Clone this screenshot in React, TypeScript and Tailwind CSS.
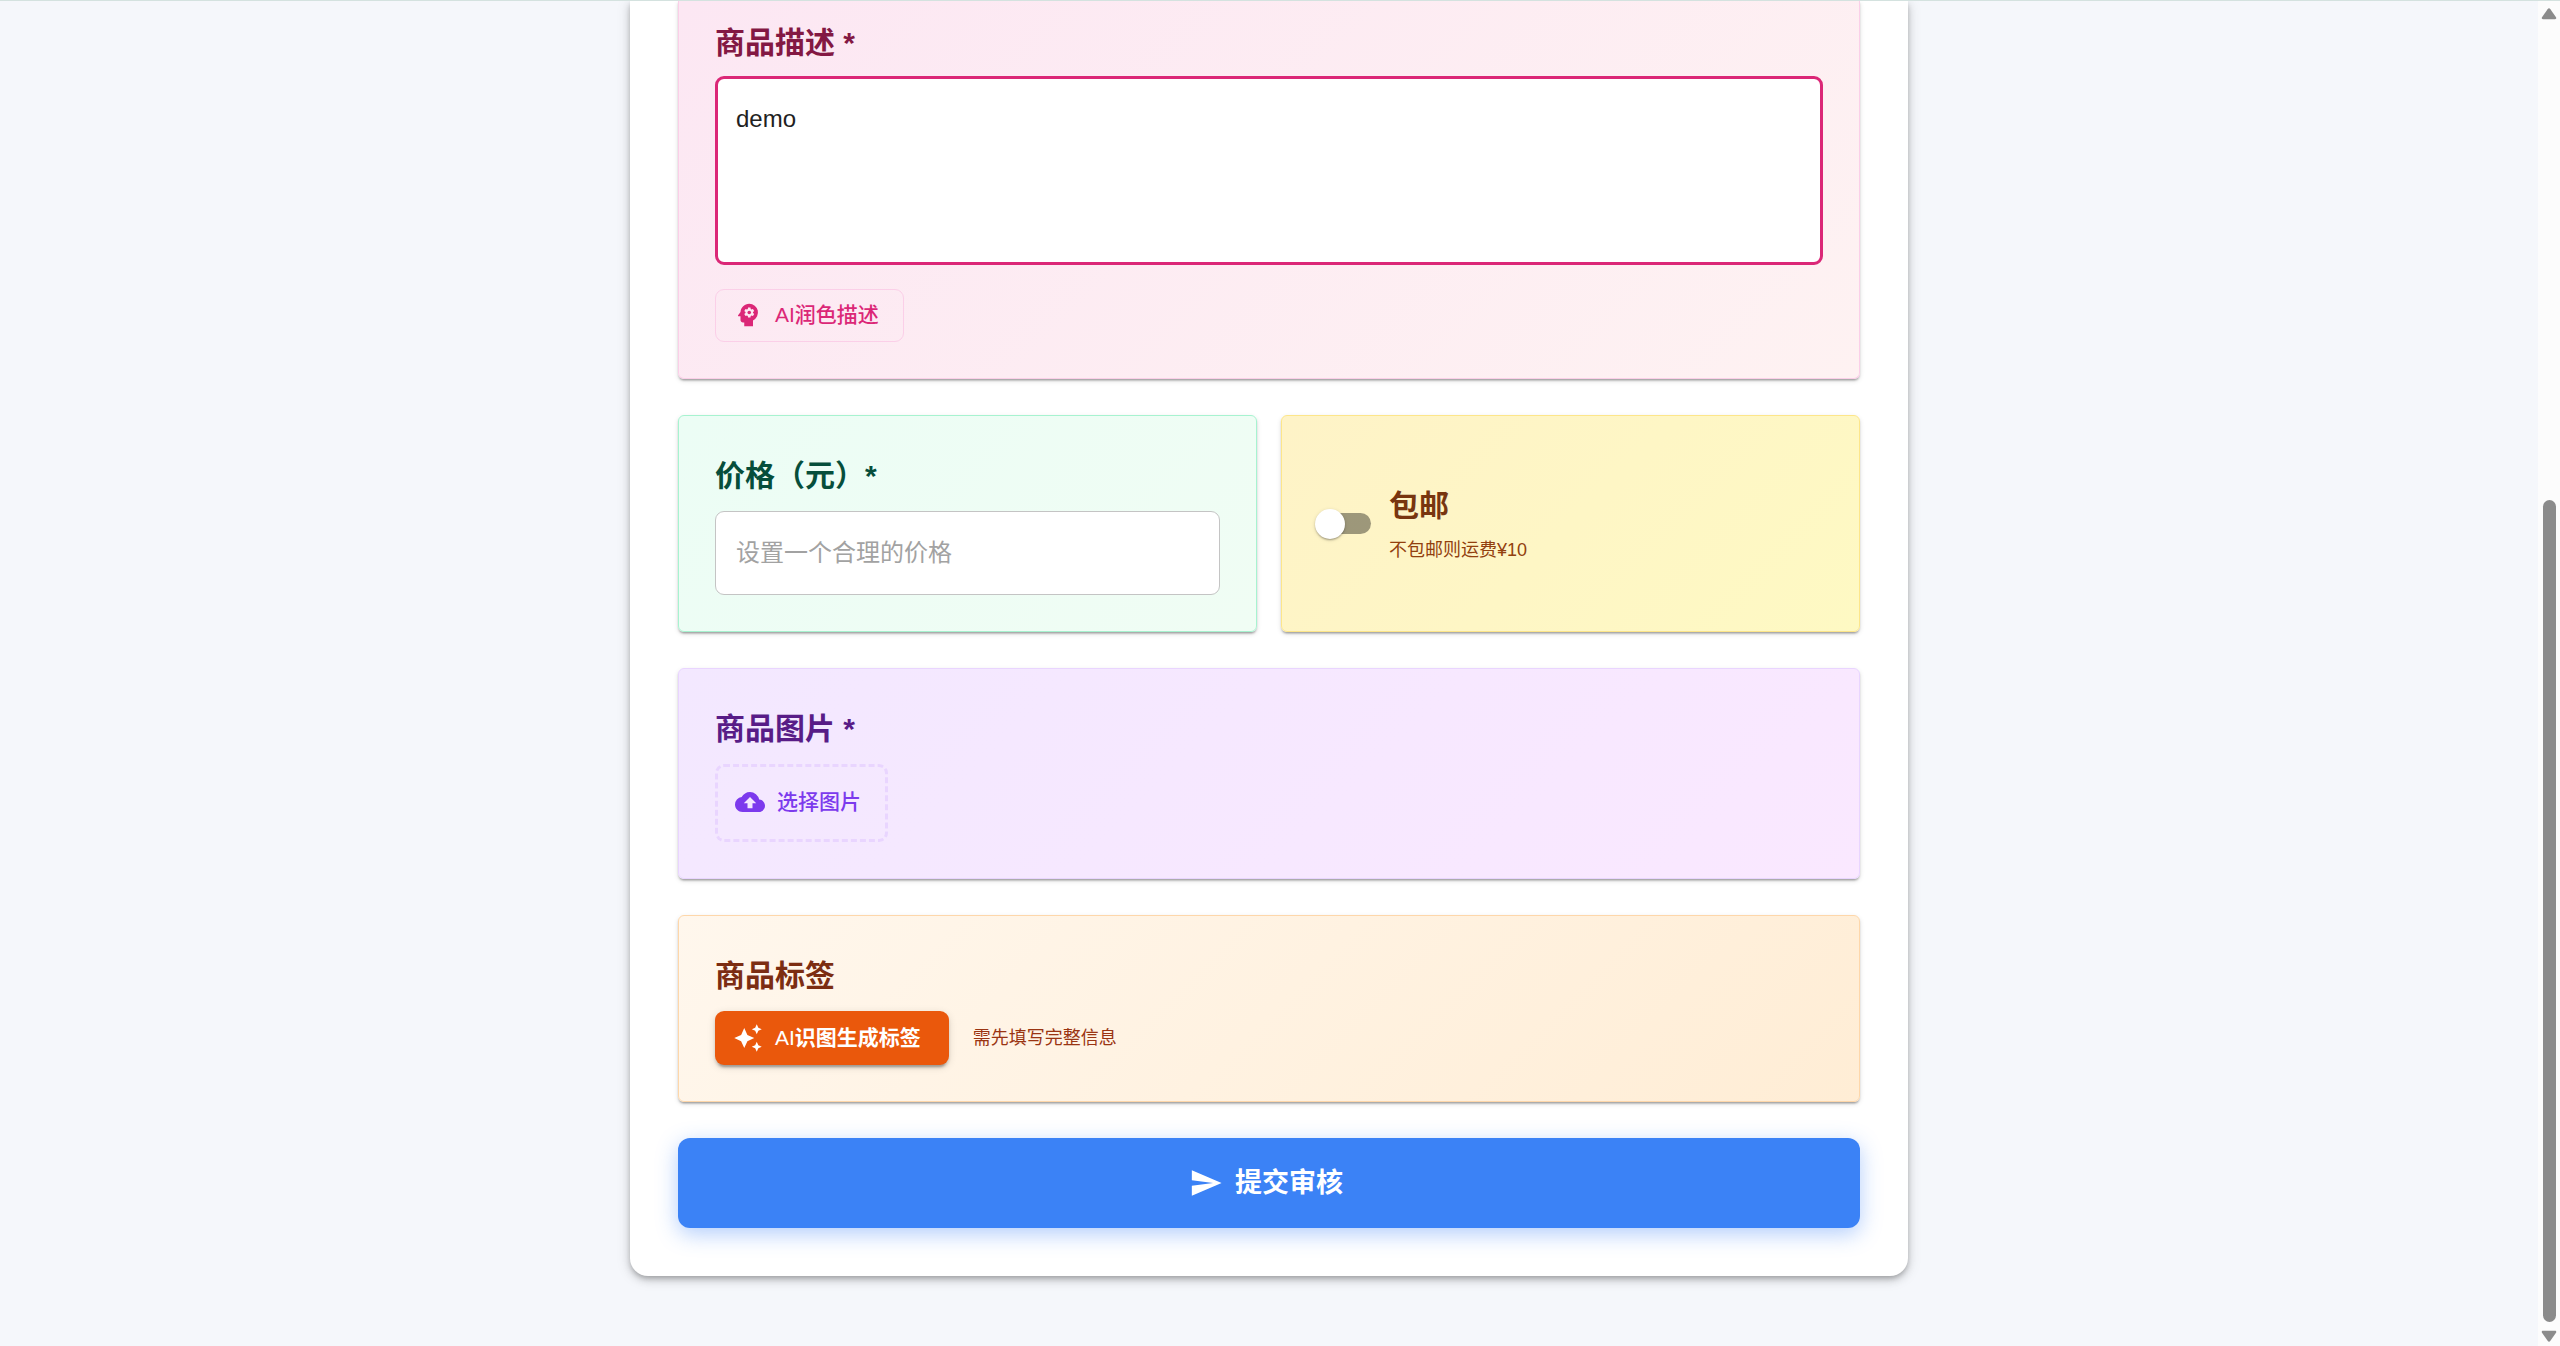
import { useState } from "react";
import type { ReactNode } from "react";
import clsx from "clsx";
import { MdAutoAwesome, MdCloudUpload, MdPsychology, MdSend } from "react-icons/md";

const cardShadow =
  "shadow-[0_3px_2px_-2px_rgba(0,0,0,0.2),0_2px_2px_0_rgba(0,0,0,0.14),0_2px_5px_0_rgba(0,0,0,0.12)]";

type SectionProps = {
  className?: string;
  children: ReactNode;
};

function Section({ className, children }: SectionProps) {
  return (
    <section className={clsx("border bg-linear-135 px-9", cardShadow, className)}>
      {children}
    </section>
  );
}

function Scrollbar() {
  return (
    <div aria-hidden="true" className="flex w-[22px] shrink-0 flex-col items-center bg-[#fcfcfc] pt-[7px] pb-1">
      <svg viewBox="0 0 16 12" className="h-3 w-4 fill-[#8b8b8b]">
        <path d="M6.6 1.2a1.8 1.8 0 0 1 2.8 0l5.6 8c.6 1 .2 2-1 2H2c-1.2 0-1.6-1-1-2z" />
      </svg>
      <div className="h-[480px] shrink-0" />
      <div className="w-[13px] flex-1 rounded-full bg-[#8b8b8b]" />
      <svg viewBox="0 0 16 12" className="mt-2 h-3 w-4 fill-[#8b8b8b]">
        <path d="M6.6 10.8a1.8 1.8 0 0 0 2.8 0l5.6-8c.6-1 .2-2-1-2H2c-1.2 0-1.6 1-1 2z" />
      </svg>
    </div>
  );
}

export default function App() {
  const [description, setDescription] = useState("demo");
  const [price, setPrice] = useState("");
  const [freeShipping, setFreeShipping] = useState(false);

  return (
    <div className="flex h-screen overflow-hidden border-t border-[#d4e2df] bg-[#f5f7fb] font-['Liberation_Sans','Noto_Sans_CJK_SC',sans-serif]">
      <main className="flex-1">
        <form
          onSubmit={(e) => e.preventDefault()}
          className="mx-auto flex max-w-[1278px] flex-col gap-9 rounded-b-[18px] bg-white px-12 pb-12 shadow-[0_3px_5px_-1px_rgba(0,0,0,0.2),0_4px_8px_0_rgba(0,0,0,0.14),0_2px_15px_0_rgba(0,0,0,0.12)]"
        >
          <Section className="rounded-b-md border-t-0 border-[#fbcfe8] from-[#fce7f3] to-[#fef2f2] pt-[18px] pb-9">
            <label
              htmlFor="description"
              className="mb-2.5 block text-[30px] leading-[47px] font-bold text-[#831843]"
            >
              商品描述 *
            </label>
            <textarea
              id="description"
              value={description}
              onChange={(e) => setDescription(e.target.value)}
              className="block h-[189px] w-full resize-none rounded-[9px] border-3 border-[#db2777] bg-white px-[18px] py-[22px] text-2xl leading-[35px] text-[#212121] outline-none"
            />
            <button
              type="button"
              className="mt-6 flex h-[53px] items-center gap-3 rounded-[9px] border border-[#fbcfe8] pr-6 pb-0.5 pl-[17px] text-[21px] font-medium text-[#db2777]"
            >
              <MdPsychology className="size-[30px]" />
              AI润色描述
            </button>
          </Section>

          <div className="grid grid-cols-2 gap-6">
            <Section className="rounded-md border-[#a7f3d0] from-[#ecfdf5] to-[#f0fdf4] py-9">
              <label
                htmlFor="price"
                className="mb-3 block text-[30px] leading-[47px] font-bold text-[#064e3b]"
              >
                价格（元）*
              </label>
              <input
                id="price"
                inputMode="decimal"
                value={price}
                onChange={(e) => setPrice(e.target.value)}
                placeholder="设置一个合理的价格"
                className="block h-[84px] w-full rounded-[9px] border border-[#c4c4c4] bg-white px-5 text-2xl text-[#212121] outline-none placeholder:text-[#a2a2a2]"
              />
            </Section>

            <Section className="flex items-center rounded-md border-[#fde68a] from-[#fef3c7] to-[#fef9c3] py-9">
              <label className="flex items-center gap-[18px]">
                <span className="relative -ml-[3px] flex h-[30px] w-14 items-center justify-end">
                  <input
                    type="checkbox"
                    role="switch"
                    aria-label="包邮"
                    checked={freeShipping}
                    onChange={(e) => setFreeShipping(e.target.checked)}
                    className="peer h-[21px] w-[51px] appearance-none rounded-full bg-black/38 outline-none checked:bg-[#d97706]"
                  />
                  <span className="pointer-events-none absolute left-0 size-[30px] rounded-full bg-white shadow-[0_2px_2px_-1px_rgba(0,0,0,0.2),0_1px_2px_0_rgba(0,0,0,0.14),0_1px_4px_0_rgba(0,0,0,0.12)] peer-checked:left-[30px]" />
                </span>
                <span className="flex flex-col gap-1.5">
                  <span className="text-[30px] leading-[47px] font-bold text-[#78350f]">包邮</span>
                  <span className="text-lg leading-[30px] text-[#92400e]">不包邮则运费¥10</span>
                </span>
              </label>
            </Section>
          </div>

          <Section className="rounded-md border-[#e9d5ff] from-[#f3e8ff] to-[#fae8ff] py-9">
            <h2 className="mb-3 text-[30px] leading-[47px] font-bold text-[#581c87]">商品图片 *</h2>
            <button
              type="button"
              className="flex h-[78px] items-center gap-3 rounded-[9px] border-3 border-dashed border-[#e9d5ff] pr-6 pb-0.5 pl-[17px] text-[21px] font-medium text-[#7c3aed]"
            >
              <MdCloudUpload className="size-[30px]" />
              选择图片
            </button>
          </Section>

          <Section className="rounded-md border-[#fed7aa] from-[#fff7ed] to-[#ffedd5] py-9">
            <h2 className="mb-3 text-[30px] leading-[47px] font-bold text-[#7c2d12]">商品标签</h2>
            <div className="flex items-center gap-6">
              <button
                type="button"
                className="flex h-[54px] items-center gap-3 rounded-[9px] bg-[#ea580c] pr-7 pl-[18px] text-[21px] text-white shadow-[0_5px_2px_-3px_rgba(0,0,0,0.2),0_3px_3px_0_rgba(0,0,0,0.14),0_2px_8px_0_rgba(0,0,0,0.12)]"
              >
                <MdAutoAwesome className="size-[30px]" />
                <span>
                  AI<strong className="font-bold">识图生成标签</strong>
                </span>
              </button>
              <span className="text-lg text-[#9a3412]">需先填写完整信息</span>
            </div>
          </Section>

          <button
            type="submit"
            className="flex h-[90px] items-center justify-center gap-3 rounded-xl bg-[#3b82f6] text-[27px] font-bold text-white shadow-[0_6px_21px_0_rgba(59,130,246,0.39)]"
          >
            <MdSend className="-ml-1.5 size-[34px]" />
            提交审核
          </button>
        </form>
      </main>
      <Scrollbar />
    </div>
  );
}
